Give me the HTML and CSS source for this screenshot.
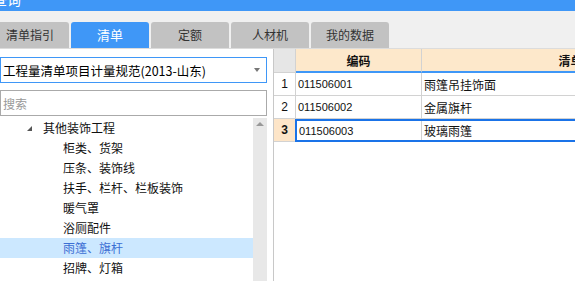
FILE: index.html
```html
<!DOCTYPE html>
<html lang="zh-CN">
<head>
    <meta charset="UTF-8">
    <title>清单查询</title>
    <link rel="stylesheet" href="styles.css">
</head>
<body>
  <div class="titlebar"><span class="title">查询</span></div>

  <div class="tabbar">
    <div class="tab">清单指引</div>
    <div class="tab active">清单</div>
    <div class="tab">定额</div>
    <div class="tab">人材机</div>
    <div class="tab">我的数据</div>
  </div>

  <div class="main">
    <div class="left">
      <div class="select">
        <span>工程量清单项目计量规范(2013-山东)</span>
        <span class="caret"></span>
      </div>
      <input class="search" type="text" placeholder="搜索">

      <div class="tree-wrap">
        <ul class="tree">
          <li class="node"><span class="toggle"></span>其他装饰工程</li>
          <li class="leaf">柜类、货架</li>
          <li class="leaf">压条、装饰线</li>
          <li class="leaf">扶手、栏杆、栏板装饰</li>
          <li class="leaf">暖气罩</li>
          <li class="leaf">浴厕配件</li>
          <li class="leaf selected">雨篷、旗杆</li>
          <li class="leaf">招牌、灯箱</li>
        </ul>
        <div class="scrollbar"><span class="arrow-up"></span></div>
      </div>
    </div>

    <div class="grid">
      <div class="row head">
        <div class="cell idx"></div>
        <div class="cell code">编码</div>
        <div class="cell name">清单名称</div>
      </div>
      <div class="row">
        <div class="cell idx">1</div>
        <div class="cell code">011506001</div>
        <div class="cell name">雨篷吊挂饰面</div>
      </div>
      <div class="row">
        <div class="cell idx">2</div>
        <div class="cell code">011506002</div>
        <div class="cell name">金属旗杆</div>
      </div>
      <div class="row current">
        <div class="cell idx">3</div>
        <div class="sel">
          <div class="cell code">011506003</div>
          <div class="cell name">玻璃雨篷</div>
        </div>
      </div>
    </div>
  </div>
</body>
</html>
```

FILE: styles.css
```css
body {
    margin: 0;
    font-family: "Noto Sans CJK SC", "Liberation Sans", sans-serif;
    font-size: 12px;
    color: #111;
    background: #fff;
    overflow: hidden;
}

/* window title, mostly scrolled off the top */
.titlebar {
    height: 11px;
    background-color: #3f97f7;
    overflow: hidden;
}

.title {
    display: block;
    margin-top: -11px;
    margin-left: -7px;
    font-size: 14px;
    line-height: 20px;
    color: #fff;
}

/* tabs */
.tabbar {
    display: flex;
    gap: 2px;
    height: 26px;
    padding-top: 11px;
    margin-left: -9px;
    background-color: #f0f0f0;
    border-bottom: 1px solid #dcdcdc;
}

.tab {
    width: 78px;
    height: 26px;
    line-height: 26px;
    text-align: center;
    background-color: #c2c2c2;
    color: #333;
    border-radius: 3px 3px 0 0;
}

.tab.active {
    background-color: #3f97f7;
    color: #fff;
    font-size: 13px;
}

.main {
    display: flex;
    height: 232px;
    overflow: hidden;
}

/* left side */
.left {
    width: 267px;
    flex-shrink: 0;
    margin-right: 6px;
    padding-top: 8px;
    display: flex;
    flex-direction: column;
}

.select {
    height: 26px;
    box-sizing: border-box;
    border: 1px solid #3f97f7;
    padding: 0 2px;
    display: flex;
    align-items: center;
    justify-content: space-between;
    font-size: 12.5px;
    color: #000;
}

.caret {
    width: 0;
    height: 0;
    margin-right: 4px;
    border-left: 3px solid transparent;
    border-right: 3px solid transparent;
    border-top: 4px solid #777;
}

.search {
    height: 26px;
    box-sizing: border-box;
    margin: 7px 0 0 0;
    border: 1px solid #aaa;
    padding: 0 2px;
    font-family: inherit;
    font-size: 12px;
    outline: none;
}

.search::placeholder {
    color: #999;
}

.tree-wrap {
    flex: 1;
    display: flex;
    margin-top: 2px;
}

.tree {
    flex: 1;
    list-style: none;
    margin: 0;
    padding: 0;
}

.tree li {
    height: 20px;
    line-height: 20px;
    white-space: nowrap;
}

.tree .node {
    padding-left: 27px;
    display: flex;
    align-items: center;
}

.toggle {
    width: 0;
    height: 0;
    margin-right: 11px;
    border-left: 5px solid transparent;
    border-bottom: 5px solid #555;
}

.tree .leaf {
    padding-left: 63px;
}

.tree .selected {
    background-color: #cce8ff;
    color: #3c6fd4;
}

.scrollbar {
    width: 14px;
    background-color: #e8e8e8;
    display: flex;
    justify-content: center;
}

.arrow-up {
    width: 0;
    height: 0;
    margin-top: 4px;
    border-left: 4px solid transparent;
    border-right: 4px solid transparent;
    border-bottom: 4px solid #999;
}

/* right side grid */
.grid {
    flex: 1;
    border-left: 1px solid #c8c8c8;
    overflow: hidden;
}

.row {
    display: flex;
    height: 23px;
}

.cell {
    flex-shrink: 0;
    box-sizing: border-box;
    height: 100%;
    border-right: 1px solid #d2d2d2;
    border-bottom: 1px solid #d2d2d2;
    display: flex;
    align-items: center;
    white-space: nowrap;
}

.idx {
    width: 22px;
    justify-content: center;
    font-family: "Liberation Sans", sans-serif;
    font-size: 12px;
}

.code {
    width: 126px;
    padding-left: 2px;
    font-family: "Liberation Sans", sans-serif;
    font-size: 11px;
}

.name {
    width: 322px;
    padding-left: 2px;
}

.head {
    height: 24px;
}

.head .cell {
    justify-content: center;
    padding: 0;
    font-weight: bold;
    font-family: "Noto Sans CJK SC", sans-serif;
    font-size: 12px;
    background-color: #fde8cb;
    border-bottom: 2px solid #3f97f7;
}

.head .idx {
    background-color: #e6e6e6;
    border-bottom: 1px solid #d2d2d2;
}

.current .idx {
    background-color: #fde5c8;
    font-weight: bold;
}

.sel {
    display: flex;
    box-sizing: border-box;
    height: 23px;
    border: 2px solid #1a73e8;
    border-right: none;
    margin-left: -1px;
}

.sel .cell {
    border-bottom: none;
}

.sel .code {
    width: 125px;
}
```
